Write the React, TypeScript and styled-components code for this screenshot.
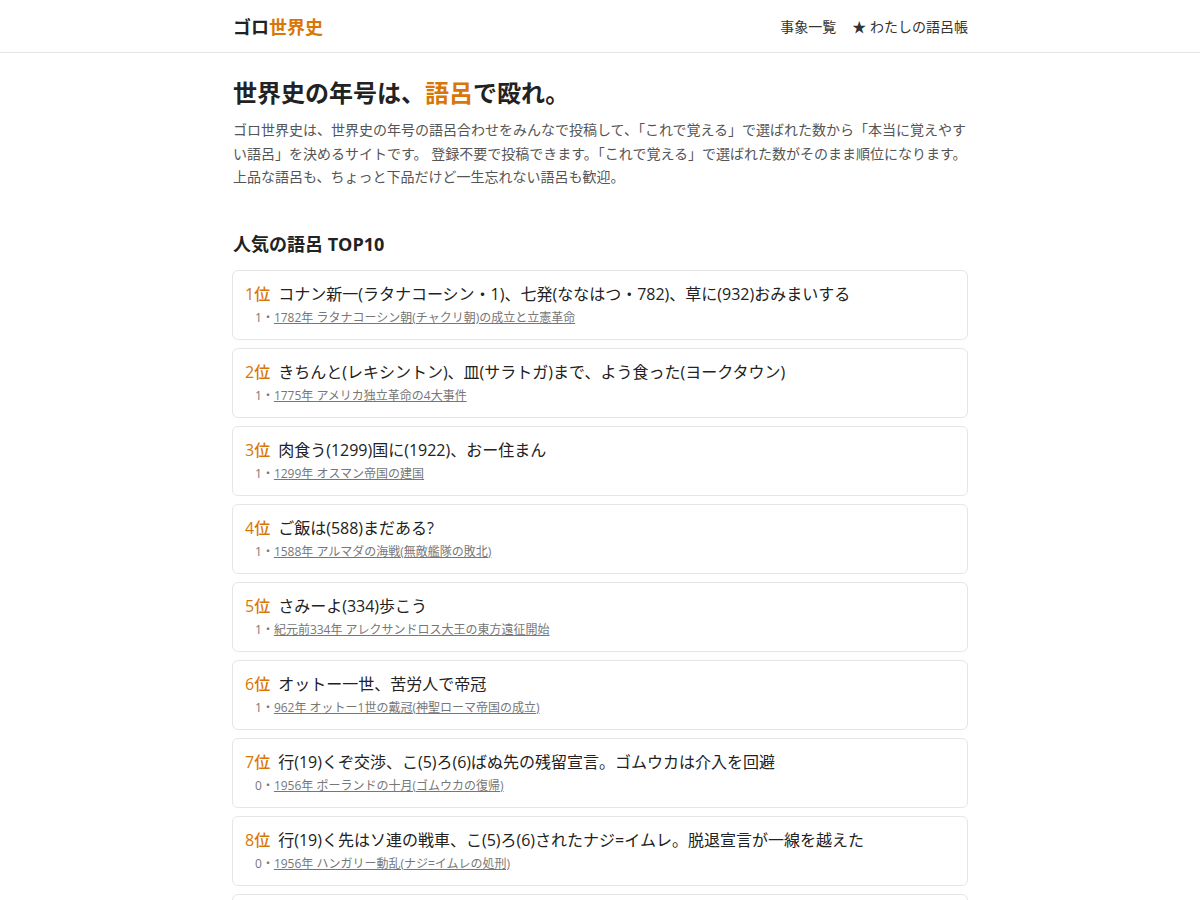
import React from 'react';
import styled, { createGlobalStyle } from 'styled-components';

interface Goro {
	id: number;
	text: string;
	votes: number;
	event: string;
}

const ACCENT = '#d97706';

const ranking: Goro[] = [
	{ id: 1, text: 'コナン新一(ラタナコーシン・1)、七発(ななはつ・782)、草に(932)おみまいする', votes: 1, event: '1782年 ラタナコーシン朝(チャクリ朝)の成立と立憲革命' },
	{ id: 2, text: 'きちんと(レキシントン)、皿(サラトガ)まで、よう食った(ヨークタウン)', votes: 1, event: '1775年 アメリカ独立革命の4大事件' },
	{ id: 3, text: '肉食う(1299)国に(1922)、おー住まん', votes: 1, event: '1299年 オスマン帝国の建国' },
	{ id: 4, text: 'ご飯は(588)まだある?', votes: 1, event: '1588年 アルマダの海戦(無敵艦隊の敗北)' },
	{ id: 5, text: 'さみーよ(334)歩こう', votes: 1, event: '紀元前334年 アレクサンドロス大王の東方遠征開始' },
	{ id: 6, text: 'オットー一世、苦労人で帝冠', votes: 1, event: '962年 オットー1世の戴冠(神聖ローマ帝国の成立)' },
	{ id: 7, text: '行(19)くぞ交渉、こ(5)ろ(6)ばぬ先の残留宣言。ゴムウカは介入を回避', votes: 0, event: '1956年 ポーランドの十月(ゴムウカの復帰)' },
	{ id: 8, text: '行(19)く先はソ連の戦車、こ(5)ろ(6)されたナジ=イムレ。脱退宣言が一線を越えた', votes: 0, event: '1956年 ハンガリー動乱(ナジ=イムレの処刑)' },
	{ id: 9, text: 'いい国(1192)つくろう鎌倉幕府', votes: 0, event: '1192年 源頼朝の征夷大将軍就任' },
	{ id: 10, text: '一夜にむなしく(1467)応仁の乱', votes: 0, event: '1467年 応仁の乱' },
];

const GlobalStyle = createGlobalStyle`
	* {
		box-sizing: border-box;
	}
	body {
		margin: 0;
		background: #ffffff;
		color: #222222;
		font-family: 'Open Sans', 'Noto Sans CJK JP', sans-serif;
	}
`;

const App: React.FC = () => {
	return (
		<>
			<GlobalStyle />
			<Header>
				<HeaderInner>
					<Logo>
						ゴロ<LogoAccent>世界史</LogoAccent>
					</Logo>
					<Nav>
						<NavLink href='#'>事象一覧</NavLink>
						<NavLink href='#'>★ わたしの語呂帳</NavLink>
					</Nav>
				</HeaderInner>
			</Header>

			<Main>
				<Hero>
					<HeroTitle>
						世界史の年号は、<Accent>語呂</Accent>で殴れ。
					</HeroTitle>
					<HeroDesc>
						ゴロ世界史は、世界史の年号の語呂合わせをみんなで投稿して、「これで覚える」で選ばれた数から「本当に覚えやすい語呂」を決めるサイトです。
						登録不要で投稿できます。「これで覚える」で選ばれた数がそのまま順位になります。上品な語呂も、ちょっと下品だけど一生忘れない語呂も歓迎。
					</HeroDesc>
				</Hero>

				<Section>
					<SectionTitle>人気の語呂 TOP10</SectionTitle>
					<RankList>
						{ranking.map((goro, i) => (
							<RankCard key={goro.id}>
								<CardHead>
									<Rank>{i + 1}位</Rank>
									<GoroText>{goro.text}</GoroText>
								</CardHead>
								<Meta>
									{goro.votes}・<EventLink href='#'>{goro.event}</EventLink>
								</Meta>
							</RankCard>
						))}
					</RankList>
				</Section>
			</Main>
		</>
	);
};

//Styled Component
const Header = styled.header`
	border-bottom: 1px solid #e5e5e5;
`;

const HeaderInner = styled.div`
	max-width: 736px;
	height: 52px;
	margin: 0 auto;
	display: flex;
	align-items: center;
	justify-content: space-between;
`;

const Logo = styled.div`
	font-size: 18px;
	font-weight: 700;
	color: #222222;
	padding-left: 1px;
`;

const LogoAccent = styled.span`
	color: ${ACCENT};
`;

const Nav = styled.nav`
	display: flex;
	gap: 16px;
`;

const NavLink = styled.a`
	font-size: 14px;
	color: #333333;
	text-decoration: none;
`;

const Main = styled.main`
	max-width: 736px;
	margin: 0 auto;
	padding-top: 24px;
`;

const Hero = styled.section`
	margin-bottom: 42px;
`;

const HeroTitle = styled.h1`
	font-size: 24px;
	font-weight: 700;
	line-height: 32px;
	margin: 0 0 9px;
	padding-left: 1px;
`;

const Accent = styled.span`
	color: ${ACCENT};
`;

const HeroDesc = styled.p`
	font-size: 14px;
	line-height: 23.5px;
	color: #555555;
	margin: 0;
	padding-left: 1px;
`;

const Section = styled.section``;

const SectionTitle = styled.h2`
	font-size: 18px;
	font-weight: 700;
	line-height: 26px;
	margin: 0 0 13px;
	padding-left: 1px;
`;

const RankList = styled.div`
	display: flex;
	flex-direction: column;
	gap: 8px;
`;

const RankCard = styled.div`
	border: 1px solid #e5e5e5;
	border-radius: 6px;
	padding: 11px 12px 11px;
	display: flex;
	flex-direction: column;
	gap: 2px;
`;

const CardHead = styled.div`
	display: flex;
	align-items: baseline;
	gap: 8px;
	line-height: 24px;
`;

const Rank = styled.span`
	font-size: 16px;
	font-weight: 500;
	color: ${ACCENT};
`;

const GoroText = styled.span`
	font-size: 16px;
	color: #222222;
`;

const Meta = styled.div`
	font-size: 12px;
	line-height: 20px;
	color: #777777;
	padding-left: 10px;
`;

const EventLink = styled.a`
	color: #777777;
	text-decoration: underline;
`;

export default App;
